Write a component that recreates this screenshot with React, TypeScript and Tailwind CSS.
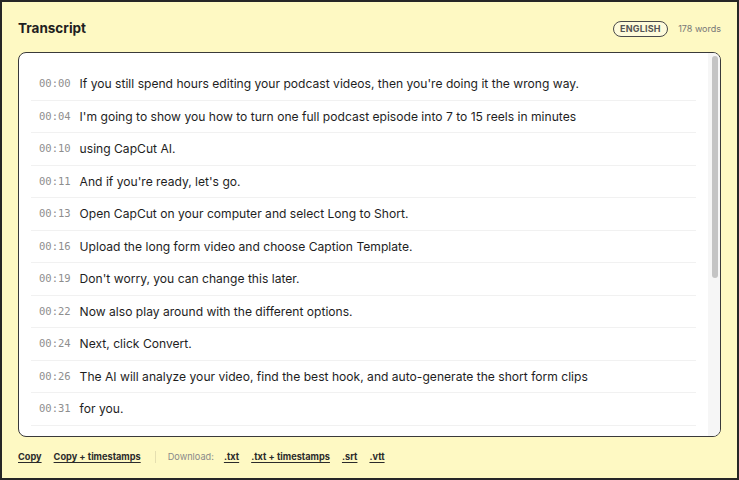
import { useState } from 'react';

type Line = { t: string; text: string };

const LINES: Line[] = [
  { t: '00:00', text: "If you still spend hours editing your podcast videos, then you're doing it the wrong way." },
  { t: '00:04', text: "I'm going to show you how to turn one full podcast episode into 7 to 15 reels in minutes" },
  { t: '00:10', text: 'using CapCut AI.' },
  { t: '00:11', text: "And if you're ready, let's go." },
  { t: '00:13', text: 'Open CapCut on your computer and select Long to Short.' },
  { t: '00:16', text: 'Upload the long form video and choose Caption Template.' },
  { t: '00:19', text: "Don't worry, you can change this later." },
  { t: '00:22', text: 'Now also play around with the different options.' },
  { t: '00:24', text: 'Next, click Convert.' },
  { t: '00:26', text: 'The AI will analyze your video, find the best hook, and auto-generate the short form clips' },
  { t: '00:31', text: 'for you.' },
  { t: '00:36', text: 'And then you just have to pick the clips that you want and then export them.' },
];

const DOWNLOADS = ['.txt', '.txt + timestamps', '.srt', '.vtt'];

const sans = "font-['Inter','Liberation_Sans',sans-serif]";

export default function App() {
  const [copied, setCopied] = useState<string | null>(null);

  return (
    <div
      className={`flex h-[480px] w-[739px] flex-col border-2 border-[#262626] bg-[#fef9c3] px-4 pt-4 ${sans}`}
    >
      {/* header */}
      <div className="flex h-5 items-center justify-between pt-px">
        <h2 className="text-[13.5px] font-bold text-[#1f1f1f]">Transcript</h2>
        <div className="flex items-center gap-[10px]">
          <span className="flex h-[16px] items-center rounded-full border-[1.5px] border-[#4a4a4a] bg-white/40 px-[6.5px] text-[9px] font-bold leading-none tracking-[0.02em] text-[#555]">
            ENGLISH
          </span>
          <span className="text-[9px] text-[#777]">178 words</span>
        </div>
      </div>

      {/* transcript box */}
      <div className="mt-[14px] flex h-[385px] overflow-hidden rounded-[8px] border border-[#3a3a3a] bg-white">
        <div className="flex-1 overflow-hidden px-3 pt-[15px]">
          {LINES.map((l) => (
            <div
              key={l.t}
              className="flex items-center gap-[9px] border-b border-[#f1f1f1] px-[8px] py-[7px]"
            >
              <span className="font-['DejaVu_Sans_Mono',monospace] text-[10.5px] leading-[17.5px] text-[#8e8e8e]">
                {l.t}
              </span>
              <span className="whitespace-nowrap text-[12.1px] leading-[17.5px] text-[#1e1e1e]">{l.text}</span>
            </div>
          ))}
        </div>
        {/* scrollbar */}
        <div className="flex w-[12px] flex-col bg-[#f6f6f6] pl-[4px] pr-[1px] pt-[3px]">
          <div className="h-[222px] w-[6px] rounded-full bg-[#c4c4c4]" />
        </div>
      </div>

      {/* footer actions */}
      <div className="mt-[12px] flex h-4 items-center text-[9.2px] leading-[14px]">
        {['Copy', 'Copy + timestamps'].map((c) => (
          <button
            key={c}
            onClick={() => setCopied(c)}
            className="mr-3 font-bold text-[#2b2b2b] underline underline-offset-2"
          >
            {copied === c ? 'Copied!' : c}
          </button>
        ))}
        <span className="mr-3 ml-[2px] h-3 w-px bg-[#e5dfb0]" />
        <span className="mr-[10px] text-[#8a8a8a]">Download:</span>
        {DOWNLOADS.map((d) => (
          <a key={d} className="mr-3 font-bold text-[#2b2b2b] underline underline-offset-2">
            {d}
          </a>
        ))}
      </div>
    </div>
  );
}
